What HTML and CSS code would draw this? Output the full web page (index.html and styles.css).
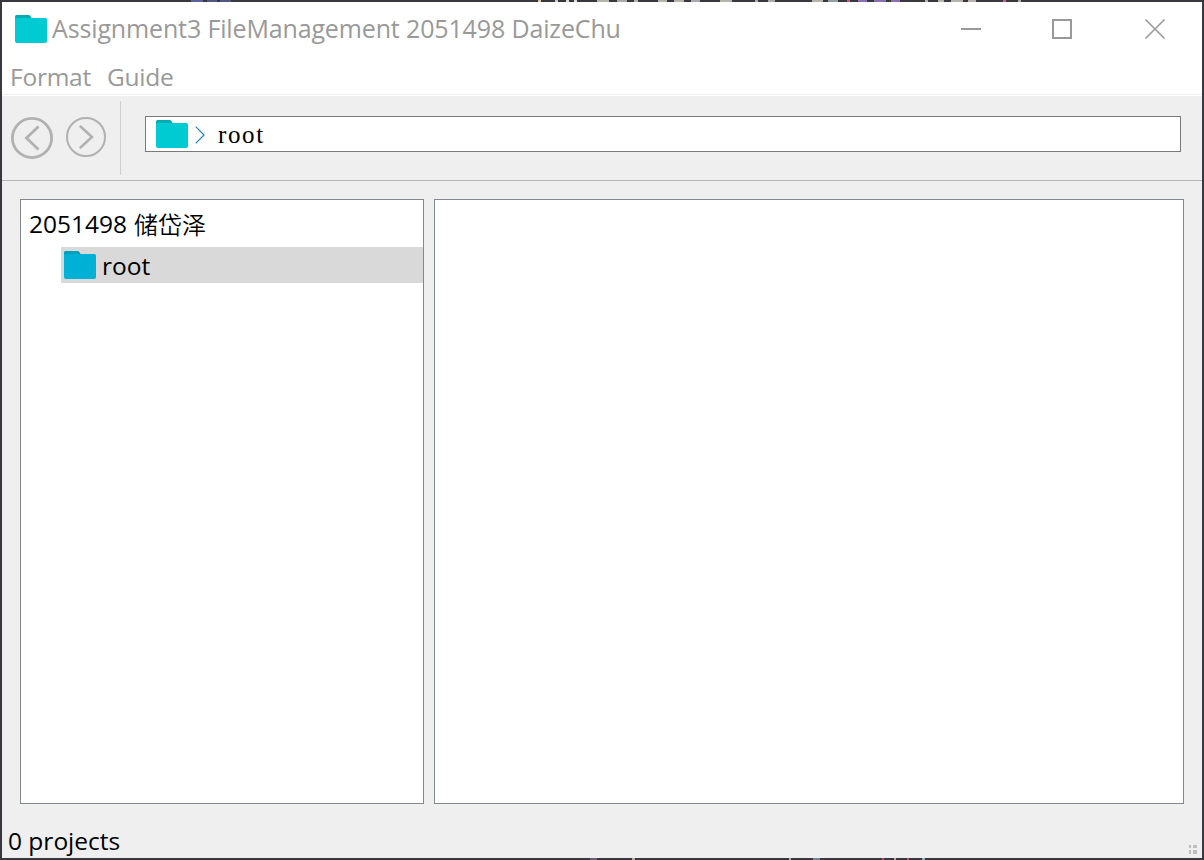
FILE: index.html
```html
<!DOCTYPE html>
<html lang="en">
<head>
<meta charset="utf-8">
<title>Assignment3 FileManagement</title>
<link rel="stylesheet" href="styles.css">
</head>
<body>
<div class="window">
  <header class="titlebar">
    <svg class="folder" viewBox="0 0 32 28"><path class="tab" d="M0 6V1.5Q0 0 1.5 0H14Q15 0 16 2L18 6Z"/><path class="front" d="M0 3H30.5Q32 3 32 4.5V26Q32 28 30 28H2Q0 28 0 26Z"/></svg>
    <span class="title">Assignment3 FileManagement 2051498 DaizeChu</span>
    <div class="controls">
      <svg viewBox="0 0 20 20"><path d="M0 10H20"/></svg>
      <svg viewBox="0 0 20 20"><path d="M1 1H19V19H1Z"/></svg>
      <svg viewBox="0 0 20 20"><path class="thin" d="M.5.5 19.5 19.5M19.5.5.5 19.5"/></svg>
    </div>
  </header>
  <nav class="menu"><span class="format">Format</span><span class="guide">Guide</span></nav>
  <section class="toolbar">
    <svg class="back" viewBox="0 0 42 42"><circle cx="21" cy="21" r="19.6"/><path d="M27.5 9.5 15.5 21 27.5 32.5"/></svg>
    <svg class="forward" viewBox="0 0 40 40"><circle cx="20" cy="20" r="19"/><path d="M14.5 9.5 26 20 14.5 30.5"/></svg>
    <div class="divider"></div>
    <div class="address">
      <svg class="folder" viewBox="0 0 32 28"><path class="tab" d="M0 6V1.5Q0 0 1.5 0H14Q15 0 16 2L18 6Z"/><path class="front" d="M0 3H30.5Q32 3 32 4.5V26Q32 28 30 28H2Q0 28 0 26Z"/></svg>
      <svg class="chevron" viewBox="0 0 10 18"><path d="M.7.7 9 9 .7 17.3"/></svg>
      <span class="path">root</span>
    </div>
  </section>
  <main class="content">
    <div class="pane tree">
      <div class="owner"><span class="number">2051498</span><span class="name">储岱泽</span></div>
      <div class="node">
        <svg class="folder selected" viewBox="0 0 32 28"><path class="tab" d="M0 6V1.5Q0 0 1.5 0H14Q15 0 16 2L18 6Z"/><path class="front" d="M0 3H30.5Q32 3 32 4.5V26Q32 28 30 28H2Q0 28 0 26Z"/></svg>
        <span class="label">root</span>
      </div>
    </div>
    <div class="pane files"></div>
  </main>
  <footer class="status">
    <span class="count">0 projects</span>
    <svg class="grip" viewBox="0 0 8 9"><path d="M0 0H2V3H0ZM4 0H8V3H4ZM0 5H2V9H0ZM4 5H8V9H4Z"/></svg>
  </footer>
</div>
</body>
</html>
```
FILE: styles.css
```css
* { box-sizing: border-box; }
body {
  margin: 0;
  width: 1204px;
  height: 860px;
  padding: 2px;
  overflow: hidden;
  /* Desktop content showing around the window's edge */
  background:
    linear-gradient(90deg, transparent 191px, #5d6399 191px 203px, transparent 203px 207px, #505685 207px 217px, transparent 217px 220px, #505685 220px 231px, transparent 231px) 0 0 / 100% 2px no-repeat,
    linear-gradient(90deg, transparent 538px, #d8c9a8 538px 541px, transparent 541px 555px, #ccc 555px 558px, transparent 558px 566px, #ddd 566px 569px, transparent 569px 574px, #ddd 574px 577px, transparent 577px 597px, #b5b3aa 597px 609px, transparent 609px 617px, #aaa 617px 627px, transparent 627px 634px, #b5b3aa 634px 638px, transparent 638px 658px, #b5b3aa 658px 667px, transparent 667px 674px, #b5b3aa 674px 684px, transparent 684px 691px, #aaa 691px 700px, transparent 700px 720px, #b5b3aa 720px 732px, transparent 732px 755px, #aaa 755px 758px, transparent 758px 768px, #aaa 768px 775px, transparent 775px 812px, #b5b3aa 812px 823px, transparent 823px 828px, #8fa0a5 828px 838px, transparent 838px 847px, #c65a8c 847px 850px, transparent 850px 858px, #8a6fb5 858px 867px, transparent 867px 874px, #8a6fb5 874px 886px, transparent 886px 891px, #8a6fb5 891px 900px, transparent 900px 925px, #b5b3aa 925px 928px, transparent 928px 938px, #b5b3aa 938px 944px, transparent 944px 951px, #b5b3aa 951px 963px, transparent 963px 968px, #b5b3aa 968px 976px, transparent 976px 1003px, #c65a8c 1003px 1006px, transparent 1006px 1018px, #aaa 1018px 1021px, transparent 1021px) 0 0 / 100% 2px no-repeat,
    linear-gradient(90deg, transparent 590px, #675d75 590px 597px, transparent 597px 632px, #b0aca0 632px 635px, transparent 635px 789px, #b0aca0 789px 791px, transparent 791px 813px, #718894 813px 820px, transparent 820px 882px, #b54c75 882px 884px, transparent 884px 894px, #b0aca0 894px 896px, transparent 896px 907px, #b54c75 907px 909px, transparent 909px 922px, #8fb0bb 922px 925px, transparent 925px) 0 100% / 100% 2px no-repeat,
    #38383e;
  font: 24.5px/36px "Open Sans", "Noto Sans CJK SC", sans-serif;
  color: #000;
}
svg { display: block; flex: none; }
span { white-space: nowrap; }
.window {
  width: 1200px;
  height: 856px;
  display: flex;
  flex-direction: column;
  background: #efefef;
}
.titlebar {
  height: 54px;
  display: flex;
  padding: 0 37px 0 13px;
  background: #fff;
  color: #999;
}
.folder { width: 32px; height: 28px; }
.titlebar .folder { margin-top: 13px; }
.tab { fill: #00adb1; }
.front { fill: #00cad2; }
.selected .tab { fill: #009fbe; }
.selected .front { fill: #00b1d5; }
.title { margin: 8px 0 0 5px; font-size: 25px; letter-spacing: -0.14px; }
.controls { display: flex; gap: 71px; margin: 17px 0 0 auto; }
.controls svg { width: 20px; height: 20px; overflow: visible; fill: none; stroke: #999; stroke-width: 2; }
.controls svg:last-child { margin-left: 2px; }
.controls .thin { stroke-width: 1.6; }
.menu {
  height: 40px;
  display: flex;
  gap: 16px;
  padding: 3px 0 0 8px;
  background: #fff;
  box-shadow: inset 0 -1px #fff, inset 0 -2px #efefef;
  color: #999;
  letter-spacing: -0.25px;
}
.toolbar {
  height: 85px;
  display: flex;
  padding: 0 21px 0 9px;
  border-bottom: 1px solid #b5b5b5;
}
.back, .forward { fill: none; stroke: #b1b1b1; }
.back { width: 42px; height: 42px; margin-top: 21px; stroke-width: 2.8; }
.forward { width: 40px; height: 40px; margin: 21px 0 0 13px; stroke-width: 2; }
.forward path { stroke-width: 2.5; stroke-linecap: round; }
.divider { width: 1px; height: 74px; margin: 5px 0 0 14px; background: #d0d0d0; }
.address {
  flex: 1;
  height: 36px;
  display: flex;
  margin: 20px 0 0 24px;
  padding-left: 10px;
  border: 1px solid #7a7a7a;
  background: #fff;
}
.address .folder { margin-top: 3px; }
.chevron { width: 10px; height: 18px; margin: 9px 0 0 7px; fill: none; stroke: #2581bd; stroke-width: 1.2; }
.path { margin: 0 0 0 13px; font: 25px/36px "Liberation Serif", serif; letter-spacing: 1.6px; }
.content {
  flex: 1;
  display: flex;
  gap: 10px;
  padding: 18px 18px 0;
}
.pane { height: 605px; border: 1px solid #828790; background: #fff; }
.tree { width: 404px; }
.files { flex: 1; }
.owner { height: 47px; display: flex; padding: 6px 0 0 8px; }
.name { margin-left: 7px; font-family: "Noto Sans CJK SC", sans-serif; font-size: 24px; font-weight: 350; }
.node { height: 36px; display: flex; margin-left: 40px; padding-left: 3px; background: #d9d9d9; }
.node .folder { margin-top: 4px; }
.label { margin: 1px 0 0 6px; }
.status { height: 36px; display: flex; justify-content: space-between; padding: 0 5px 0 6px; }
.count { margin-top: 1px; }
.grip { width: 8px; height: 9px; margin-top: 23px; fill: #bebebe; }
```
